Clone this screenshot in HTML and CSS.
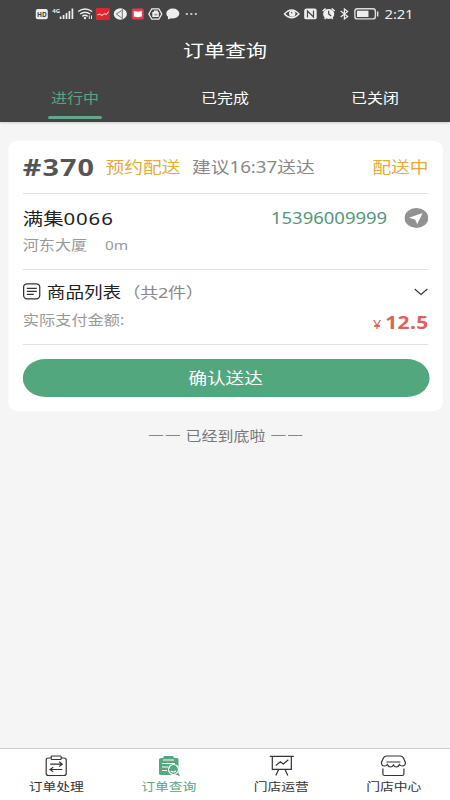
FILE: index.html
```html
<!DOCTYPE html>
<html lang="zh-CN">
<head>
<meta charset="utf-8">
<title>订单查询</title>
<link rel="stylesheet" href="styles.css">
</head>
<body>
<div class="screen">
  <header class="header">
    <div class="status">
      <svg class="status-left" viewBox="35 6 165 16" preserveAspectRatio="none">
        <rect x="36" y="9" width="12" height="10.300" rx="2" fill="#eee"/>
        <text x="37.300" y="16.700" class="hd">HD</text>
        <text x="52.500" y="13" class="net">4G</text>
        <path d="M60.800 19v-2.500M63.800 19v-4M66.700 19v-6M69.600 19v-8M72.600 19V8.500" stroke="#eee" stroke-width="1.700"/>
        <g fill="none" stroke="#eee" stroke-width="1.500"><path d="M78.300 11.500q7-5 14 0M80.300 14q5-3.500 10 0M82.500 16.300q2.700-1.900 5.400 0"/></g>
        <circle cx="85.200" cy="18" r="1.200" fill="#eee"/><path d="M89.500 15.500v3.500M91.700 15.500v3.500" stroke="#eee"/>
        <rect x="96" y="8" width="14" height="12" rx="1" fill="#dc2730"/>
        <path d="M97.500 15l2.500-1 2 1.500 3-2 1.500 1 2.500-3" fill="none" stroke="#ffc5c5"/>
        <ellipse cx="120.500" cy="14" rx="6.600" ry="5.700" fill="#eee"/>
        <path d="M122 10.500l-5.500 3.500 5.500 4M122.500 9v10" fill="none" stroke="#666" stroke-width=".9"/>
        <rect x="132" y="8.500" width="12" height="11" rx="1.500" fill="#df3d51"/>
        <path d="M134 11l4 .8 4-.8v5.500l-4 .8-4-.8z" fill="#fff"/>
        <path d="M149 14l3-5.200h7l3 5.200-3 5.200h-7z" fill="none" stroke="#eee" stroke-width="1.300"/>
        <path d="M152.500 12h1.500v-1.500h4V12h1v5h-6.500z" fill="#eee"/><path d="M154.500 13.800h3v1.700h-3z" fill="#999"/>
        <ellipse cx="173" cy="13.500" rx="6.500" ry="4.900" fill="#eee"/><path d="M168.500 16l-.5 3.500 4-1.500z" fill="#eee"/>
        <path d="M186 14h2M190.500 14h2M195 14h2" stroke="#eee" stroke-width="1.500"/>
      </svg>
      <div class="status-end">
        <svg class="status-right" viewBox="286 6 97 16" preserveAspectRatio="none">
          <path d="M287.200 14q7.200-8 14.600 0-7.300 7.500-14.600 0z" fill="none" stroke="#eee" stroke-width="1.400"/>
          <circle cx="295" cy="13.600" r="3.200" fill="#eee"/><circle cx="294.500" cy="12.800" r=".8" fill="#555"/>
          <path d="M309 8.500h8.500q2 0 2 2V18q0 1.200-2 1.200h-8.500q-2 0-2-1.500v-7q0-2 2-2.200z" fill="#eee"/>
          <path d="M310.300 17.500v-6.500l6 6v-6.500" fill="none" stroke="#484848" stroke-width="1.200"/>
          <ellipse cx="331.500" cy="14" rx="5.600" ry="5" fill="#eee"/><path d="M325.500 11l3-2.500M337.500 11l-3-2.500M327.500 19l1-1.500M335.500 19l-1-1.500" stroke="#eee" stroke-width="1.600"/>
          <path d="M331.500 10.800V14l2.500 2" fill="none" stroke="#444" stroke-width="1.200"/>
          <path d="M343.500 11l7 5.500-3.300 2.500V9l3.300 2.500-7 5.500" fill="none" stroke="#eee" stroke-width="1.200"/>
          <rect x="357.700" y="8.700" width="20.500" height="10.200" rx="2.500" fill="none" stroke="#ddd" stroke-width="1.400"/>
          <rect x="359.800" y="10.700" width="11.500" height="6.300" fill="#eee"/><path d="M380.500 11.500v5" stroke="#ddd" stroke-width="1.500"/>
        </svg>
        <span class="clock">2:21</span>
      </div>
    </div>
    <h1 class="title">订单查询</h1>
    <nav class="tabs">
      <span class="tab tab-active">进行中</span>
      <span class="tab">已完成</span>
      <span class="tab">已关闭</span>
    </nav>
  </header>
  <main class="main">
    <section class="card">
      <div class="order-head">
        <b class="order-no">#370</b>
        <span class="order-type">预约配送</span>
        <span class="order-time">建议16:37送达</span>
        <span class="order-state">配送中</span>
      </div>
      <div class="customer">
        <div class="row name-row">
          <span class="name">满集<span class="name-digits">0066</span></span>
          <span class="phone">15396009999</span>
          <svg class="locate" viewBox="0 0 20 20"><circle cx="10" cy="10" r="9.900" fill="#929292"/><path d="M15.200 5.100L3.800 9.800l5.100 1.600 1.800 4.800z" fill="#fff"/></svg>
        </div>
        <div class="row address"><span>河东大厦</span><span class="distance">0m</span></div>
      </div>
      <div class="goods">
        <div class="row goods-row">
          <svg class="list-icon" viewBox="0 0 18 17" preserveAspectRatio="none"><rect x=".8" y=".8" width="16.200" height="15" rx="3.500"/><path d="M4 5.300h10M4 8.300h10M4 11.300h7"/></svg>
          <span class="goods-title">商品列表</span><span class="goods-count">（共2件）</span>
          <svg class="chevron" viewBox="0 0 14 8" preserveAspectRatio="none"><path d="M.7 1L7 6.500 13.300 1"/></svg>
        </div>
        <div class="row pay-row"><span>实际支付金额:</span><span class="price"><small class="yen">¥</small><b>12.5</b></span></div>
      </div>
      <button class="confirm">确认送达</button>
    </section>
    <p class="end"><i class="dash"></i><i class="dash"></i><span class="end-text">已经到底啦</span><i class="dash"></i><i class="dash"></i></p>
  </main>
  <nav class="bottom">
    <a class="item"><svg class="icon" viewBox="0 0 26 22" preserveAspectRatio="none"><path d="M8 3H5.500Q3 3 3 5v13.500q0 2 2.500 2h15q2.500 0 2.500-2V5q0-2-2.500-2H18M8 2q0-1 1-1h8q1 0 1 1v1.500q0 1-1 1H9q-1 0-1-1zM7 9.200h12M16 6.800l3 2.400-3 2.400M19 14.500H7l3 2.400M7 14.500l3-2.400"/></svg><span>订单处理</span></a>
    <a class="item item-active"><svg class="icon" viewBox="0 0 26 22" preserveAspectRatio="none"><path class="fill" d="M8 1h9l1 2h3q1.500 0 1.500 1.500v15.500H5q-2 0-2-1.500V4.500Q3 3 5 3h2z"/><path class="cut" d="M7 5h11M6 8.500h13M6 12h6M6 15.500h5"/><circle class="lens" cx="17.500" cy="14.500" r="5"/><path d="M21 18.300l2.500 2.400"/><path class="cut" d="M14.800 16q2.500 1.800 5.200 0"/></svg><span>订单查询</span></a>
    <a class="item"><svg class="icon" viewBox="0 0 26 22" preserveAspectRatio="none"><path d="M1 1.300h24M3.500 1.300v13h19v-13M7 10.500l4.500-3.700 3 2.200 5-4.200M9.800 14.500L7 20.500M16.200 14.500l2.800 6"/></svg><span>门店运营</span></a>
    <a class="item"><svg class="icon" viewBox="0 0 26 22" preserveAspectRatio="none"><path d="M6 1h14q2 0 3 2l2 4.500q0 3.500-3 3.500-2 0-3-1.500-1 2.500-3 2.500t-3-2q-1 2-3 2t-3-2.500q-1 1.500-3 1.500-3 0-3-3.500L3 3q1-2 3-2zM6 7h14M2.500 13.500V19q0 1.500 1.800 1.500h17.400q1.800 0 1.800-1.500v-5.500"/></svg><span>门店中心</span></a>
  </nav>
</div>
</body>
</html>
```
FILE: styles.css
```css
* { box-sizing: border-box; }
body { margin: 0; overflow: hidden; background: #f5f5f5; }

/* A 375px layout stretched horizontally to fill the 450px window. */
.screen {
  width: 375px; height: 800px;
  display: flex; flex-direction: column;
  transform: scaleX(1.2); transform-origin: 0 0;
  font-family: "Noto Sans", "Noto Sans CJK SC", sans-serif;
  color: #333;
}

.header { height: 122px; flex: none; background: #444; color: #fff; box-shadow: 0 1px 2px #ccc; }
.status { height: 28px; padding: 6px 30.500px 0 29.200px; display: flex; justify-content: space-between; }
.status-left { width: 137.500px; height: 16px; }
.status-end { display: flex; gap: 3.500px; }
.status-right { width: 80.800px; height: 16px; }
.hd { font: bold 6.500px "Noto Sans", sans-serif; fill: #444; }
.net { font: bold 6px "Noto Sans", sans-serif; fill: #eee; }
.clock { font-size: 12.300px; line-height: 17px; letter-spacing: -.1px; color: #eee; }
.title { margin: 0; height: 45px; line-height: 44px; text-align: center; font-size: 17.500px; font-weight: 400; }
.tabs { height: 49px; display: flex; justify-content: space-around; }
.tab { position: relative; width: 45px; height: 46px; margin: 0 40px; text-align: center; white-space: nowrap; font-size: 13.300px; line-height: 50px; }
.tab-active { color: #58a580; }
.tab-active::after { content: ""; position: absolute; left: 0; right: 0; bottom: 0; height: 3px; border-radius: 2px; background: #62a889; }

.main { flex: 1; padding: 19px 6.200px 0 7px; }
.card { height: 270px; padding: 0 11.700px 0 12px; border-radius: 8px; background: #fff; }
.order-head { height: 53px; padding-bottom: 2px; display: flex; align-items: center; border-bottom: 1px solid #e2e2e2; font-size: 15.600px; }
.order-no { width: 69px; font-size: 24px; letter-spacing: .9px; color: #555; }
.order-type { width: 72px; color: #e6aa3c; }
.order-time { color: #888; }
.order-state { margin-left: auto; color: #e6aa3c; }
.row { display: flex; align-items: center; white-space: nowrap; }
.customer { height: 76px; padding-top: 10px; border-bottom: 1px solid #e2e2e2; }
.name-row { height: 28px; }
.name { padding-top: 2px; font-size: 17px; line-height: 24px; color: #222; }
.name-digits { letter-spacing: .7px; }
.phone { margin-left: auto; font-size: 15.400px; color: #4f9878; }
.locate { width: 20px; height: 20px; margin-left: 14.500px; }
.address { height: 26px; align-items: baseline; font-size: 13.400px; line-height: 26px; color: #999; }
.distance { margin-left: 15px; font-size: 12.800px; }
.goods { height: 75px; padding-top: 8px; border-bottom: 1px solid #e2e2e2; }
.goods-row { height: 27px; }
.list-icon { width: 15px; height: 17px; fill: none; stroke: #333; stroke-width: 1.300; }
.goods-title { margin-left: 5px; font-size: 15.500px; color: #222; }
.goods-count { margin-left: 1px; font-size: 15px; letter-spacing: -.2px; color: #888; }
.chevron { width: 11.700px; height: 8px; margin-left: auto; fill: none; stroke: #333; stroke-width: 1.100; }
.pay-row { height: 28px; justify-content: space-between; font-size: 13.500px; color: #999; }
.price { display: flex; align-items: baseline; gap: 3px; padding-top: 5px; font-size: 17.500px; letter-spacing: .3px; color: #e0605b; }
.yen { font-size: 12px; }
.confirm { display: block; width: 339px; height: 38px; margin: 14px 0 0 -.5px; padding: 0 0 2px; border: 0; border-radius: 19px; background: #53a77e; color: #fff; font: 15.500px "Noto Sans", "Noto Sans CJK SC", sans-serif; }
.end { margin: 0; height: 48px; display: flex; align-items: center; justify-content: center; gap: 2px; font-size: 13.300px; color: #777; }
.dash { width: 12px; height: 1px; background: #888; }
.end-text { margin: 0 3px; }

.bottom { height: 52px; flex: none; display: flex; border-top: 1px solid #ccc; background: #fff; }
.item { flex: 1; padding-top: 6px; display: flex; flex-direction: column; align-items: center; font-size: 11.500px; line-height: 19px; }
.icon { width: 21.700px; height: 22px; fill: none; stroke: #333; stroke-width: 1.200; }
.item-active { color: #58a580; }
.item-active .icon { stroke: #58a580; }
.item-active .fill { fill: #58a580; stroke: none; }
.item-active .cut { stroke: #fff; stroke-width: 1; }
.item-active .lens { fill: #58a580; stroke: #fff; }
```
